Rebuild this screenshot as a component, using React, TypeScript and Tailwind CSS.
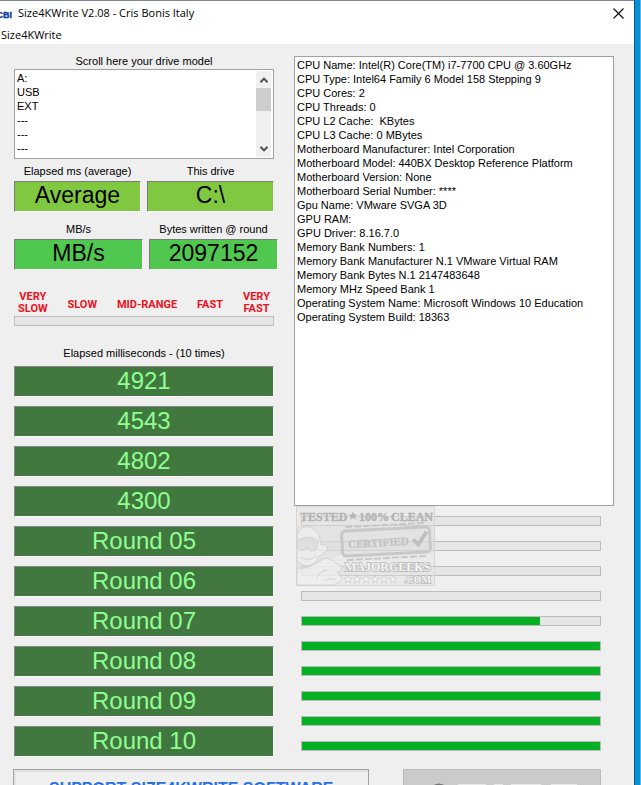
import { useRef } from 'react';

type gaugeProps = {
    value: number,
    label: string,
}

const drives = ["A:", "USB", "EXT", "---", "---", "---"];

const systemInfo = [
    "CPU Name: Intel(R) Core(TM) i7-7700 CPU @ 3.60GHz",
    "CPU Type: Intel64 Family 6 Model 158 Stepping 9",
    "CPU Cores: 2",
    "CPU Threads: 0",
    "CPU L2 Cache:  KBytes",
    "CPU L3 Cache: 0 MBytes",
    "Motherboard Manufacturer: Intel Corporation",
    "Motherboard Model: 440BX Desktop Reference Platform",
    "Motherboard Version: None",
    "Motherboard Serial Number: ****",
    "Gpu Name: VMware SVGA 3D",
    "GPU RAM:",
    "GPU Driver: 8.16.7.0",
    "Memory Bank Numbers: 1",
    "Memory Bank Manufacturer N.1 VMware Virtual RAM",
    "Memory Bank Bytes N.1 2147483648",
    "Memory MHz Speed Bank 1",
    "Operating System Name: Microsoft Windows 10 Education",
    "Operating System Build: 18363",
];

const rounds = ["4921", "4543", "4802", "4300", "Round 05", "Round 06", "Round 07", "Round 08", "Round 09", "Round 10"];

const progress = [0, 0, 0, 0, 80, 100, 100, 100, 100, 100];

const Gauge = ({ value, label }: gaugeProps) => (
    <div role="progressbar" aria-label={label} aria-valuenow={value} className="bg-[#e6e6e6] border border-[#bcbcbc] h-[10px] w-full">
        <div className="bg-[#06b025] h-full" style={{ width: value + "%" }}></div>
    </div>
)

const Field = ({ id, label, value, className }: { id: string, label: string, value: string, className: string }) => (
    <div className="flex flex-1 flex-col text-center">
        <label htmlFor={id} className="leading-4 mb-[2px]">{label}</label>
        <output id={id} className={`border border-b-white border-l-[#7c7c7c] border-r-white border-t-[#7c7c7c] h-[31px] leading-[27px] text-[23px] ${className}`}>{value}</output>
    </div>
)

const TitleBar = () => (
    <header className="bg-white border-[#7e8899] border-t h-11">
        <div className="flex h-[25px] items-center justify-between pr-[10px]">
            <div className="flex gap-1.5 items-center">
                <svg width="12" height="12" viewBox="0 0 12 12" aria-hidden="true">
                    <text x="12" y="10" textAnchor="end" fontFamily="'Liberation Sans Narrow', 'Liberation Sans', sans-serif" fontSize="9" fontWeight="bold" fill="#123f9c" stroke="#123f9c" strokeWidth=".4">CBI</text>
                </svg>
                <h1 className="font-['Open_Sans','Noto_Sans',sans-serif] text-[11px]">Size4KWrite V2.08 - Cris Bonis Italy</h1>
            </div>
            <button aria-label="Close">
                <svg width="11" height="11" viewBox="0 0 11 11" stroke="#111" strokeWidth="1.2"><path d="M.5.5l10 10M10.500.5l-10 10" /></svg>
            </button>
        </div>
        <nav className="flex">
            <button className="font-['Open_Sans','Noto_Sans',sans-serif] leading-[17px] pl-px text-[11px]">Size4KWrite</button>
        </nav>
    </header>
)

const DriveList = () => {
    const listRef = useRef<HTMLSelectElement>(null);

    return (
        <div className="bg-white border border-[#a0a0a0] flex h-[90px]">
            <select
                ref={listRef}
                id="drive"
                size={6}
                className="[scrollbar-width:none] appearance-none flex-1 h-[88px] outline-none overflow-hidden pt-[2px]"
            >
                {
                    drives.map((value, key) => (
                        <option key={key} className="h-[14px] leading-[14px] min-h-0 p-0 pl-[2px] text-[11px]">{value}</option>
                    ))
                }
            </select>
            <div className="bg-[#f0f0f0] flex flex-col items-center my-px mr-[2px] w-[15px]">
                <button aria-label="Scroll up" onClick={() => listRef.current?.scrollBy(0, -14)} className="flex h-[17px] items-center justify-center w-full">
                    <svg width="8" height="6" viewBox="0 0 8 6" fill="none" stroke="#505050" strokeWidth="2"><path d="M.5 5.200 4 1.600 7.500 5.200" /></svg>
                </button>
                <div className="bg-[#cdcdcd] h-[23px] w-full"></div>
                <button aria-label="Scroll down" onClick={() => listRef.current?.scrollBy(0, 14)} className="flex h-[17px] items-center justify-center mt-auto w-full">
                    <svg width="8" height="6" viewBox="0 0 8 6" fill="none" stroke="#505050" strokeWidth="2"><path d="M.5.8 4 4.400 7.500.8" /></svg>
                </button>
            </div>
        </div>
    )
}

const Stamp = () => (
    <svg className="absolute left-[2px] pointer-events-none top-0" width="139" height="80" viewBox="0 0 139 80" fontFamily="'Liberation Serif', serif" fontWeight="bold" aria-hidden="true">
        <rect x=".5" y=".5" width="138" height="79" fill="#e4e4e4" fillOpacity=".45" stroke="#d5d5d5" />
        <path d="M1 20h138v28H46L1 68z" fill="#d6d6d6" fillOpacity=".35" />
        <g fill="#b4b4b4" fontSize="12" stroke="#b4b4b4" strokeWidth=".4">
            <text x="4" y="15">TESTED</text>
            <path stroke="none" d="M57 5.500l1.300 3h3.200l-2.500 2 1 3.200-3-1.900-3 1.900 1-3.200-2.500-2h3.200z" />
            <text x="63" y="15">100%</text>
            <text x="95" y="15">CLEAN</text>
        </g>
        {/* geek mascot leaning into the stamp */}
        <g fill="#f0f0f0" fillOpacity=".7" stroke="#d2d2d2">
            <path d="M1 28C5 18 18 18 23 30l2 9c7-2 9 4 3 8l-6 4c-2 9-14 12-21 4z" />
            <path d="M1 35c8-5 16-5 21 0l-2 8c-4 4-8 1-8-2-2 4-8 5-11 0z" fill="#dadada" />
            <path d="M4 51c6 4 12 3 17-2" fill="none" />
            <path d="M1 62c9 2 17-4 26-9 6-2 9 1 14 5 7 3 6 7 0 8l5 6c0 5-6 5-8 7H1z" />
            <path d="M31 64c-6 1-9 4-10 8M39 74c-4-2-8-1-11 1" fill="none" />
        </g>
        <g transform="rotate(-3 90 35)" fill="none" stroke="#c8c8c8">
            <rect x="46" y="23" width="88" height="25" rx="4" strokeWidth="3" />
            <path d="M50 19h80M50 52h80" strokeWidth="2" strokeDasharray="7 2" />
            <text x="52" y="40" fontSize="11" fill="#c2c2c2" strokeWidth=".4">CERTIFIED</text>
            <path d="M117 35l5 5 9-12" strokeWidth="4" stroke="#c0c0c0" />
        </g>
        <g fill="#f6f6f6" stroke="#b8b8b8" strokeWidth="1.5" paintOrder="stroke">
            <text x="49" y="65" fontSize="12">MAJORGEEKS</text>
            <text x="108" y="77" fontSize="10">.COM</text>
        </g>
        <g fill="#f4f4f4" stroke="#bdbdbd" strokeWidth=".5">
            {
                [52, 61, 70, 79, 88, 97].map((x) => (
                    <path key={x} transform={`translate(${x} 73)`} d="M0-4l1 3h3L1.500 1l1 3L0 2l-2.500 2 1-3L-4-1h3z" />
                ))
            }
        </g>
    </svg>
)

const App = () => {
    return (
        <div className="bg-[#efefef] flex font-['Liberation_Sans',Arial,sans-serif] h-screen overflow-hidden text-[11px] text-black">
            <div className="flex-1">
                <TitleBar />
                <main className="pl-[14px] pr-5">
                    <div className="gap-5 grid grid-cols-[26fr_32fr]">
                        <section className="flex flex-col pt-[9px]">
                            <label htmlFor="drive" className="leading-4 text-center">Scroll here your drive model</label>
                            <DriveList />
                            <div className="flex gap-1.5 mt-1">
                                <Field id="average" label="Elapsed ms (average)" value="Average" className="bg-[#80c840]" />
                                <Field id="letter" label="This drive" value="C:\" className="bg-[#80c840]" />
                            </div>
                            <div className="-mr-1 flex gap-1.5 mt-[9px]">
                                <Field id="speed" label="MB/s" value="MB/s" className="bg-[#50c850]" />
                                <Field id="bytes" label="Bytes written @ round" value="2097152" className="bg-[#50c850]" />
                            </div>
                            <div className="flex font-['Roboto',sans-serif] font-bold items-center justify-between leading-3 mb-px mt-[21px] px-1 text-[#ee1122] text-center text-[11px]">
                                <span>VERY<br />SLOW</span>
                                <span className="pt-1">SLOW</span>
                                <span className="pt-1">MID-RANGE</span>
                                <span className="pt-1">FAST</span>
                                <span>VERY<br />FAST</span>
                            </div>
                            <Gauge value={0} label="Speed" />
                            <h2 className="leading-4 mt-[19px] text-center">Elapsed milliseconds - (10 times)</h2>
                            <div className="flex flex-col gap-[9px] mt-[5px]">
                                {
                                    rounds.map((value, key) => (
                                        <output key={key} className="bg-[#40783f] border border-b-white border-l-[#858585] border-r-white border-t-[#858585] h-[31px] leading-[27px] text-2xl text-[#90ff90] text-center">{value}</output>
                                    ))
                                }
                            </div>
                        </section>
                        <section className="flex flex-col pt-3">
                            <textarea
                                readOnly
                                aria-label="System information"
                                defaultValue={systemInfo.join("\n")}
                                className="bg-white border border-[#a0a0a0] h-[450px] leading-[14px] outline-none px-[2px] py-px resize-none w-full"
                            />
                            <div className="flex flex-col gap-[15px] pl-[7px] pr-[13px] pt-[10px] relative">
                                {
                                    progress.map((value, key) => (
                                        <Gauge key={key} value={value} label={`Round ${key + 1}`} />
                                    ))
                                }
                                <Stamp />
                            </div>
                        </section>
                    </div>
                    <div className="-ml-px flex gap-[34px] mt-3 pr-[13px]">
                        <button className="border border-[#a0a0a0] flex-[357] font-bold h-10 shadow-[inset_2px_2px_0_#e3e3e3] text-[#2a6fdf] text-base whitespace-nowrap">
                            SUPPORT SIZE4KWRITE SOFTWARE
                        </button>
                        <button disabled aria-label="Start" className="bg-[#cbcbcb] border border-[#bcbcbc] flex flex-[197] h-10 justify-center pt-3">
                            <svg width="150" height="20" viewBox="0 0 150 20" fill="none">
                                <path d="M4 11a8 8 0 0 1 16 0" stroke="#777" strokeWidth="3" />
                                <path d="M31 3h28M67 3h9M84 3h30M124 3h26" stroke="#e8e8e8" strokeWidth="2" />
                            </svg>
                        </button>
                    </div>
                </main>
            </div>
            <aside className="bg-[#0a8fd4] border-[#075a8c] border-l border-r border-r-[#5ab8ea] w-[7px]"></aside>
        </div>
    )
}

export default App;
